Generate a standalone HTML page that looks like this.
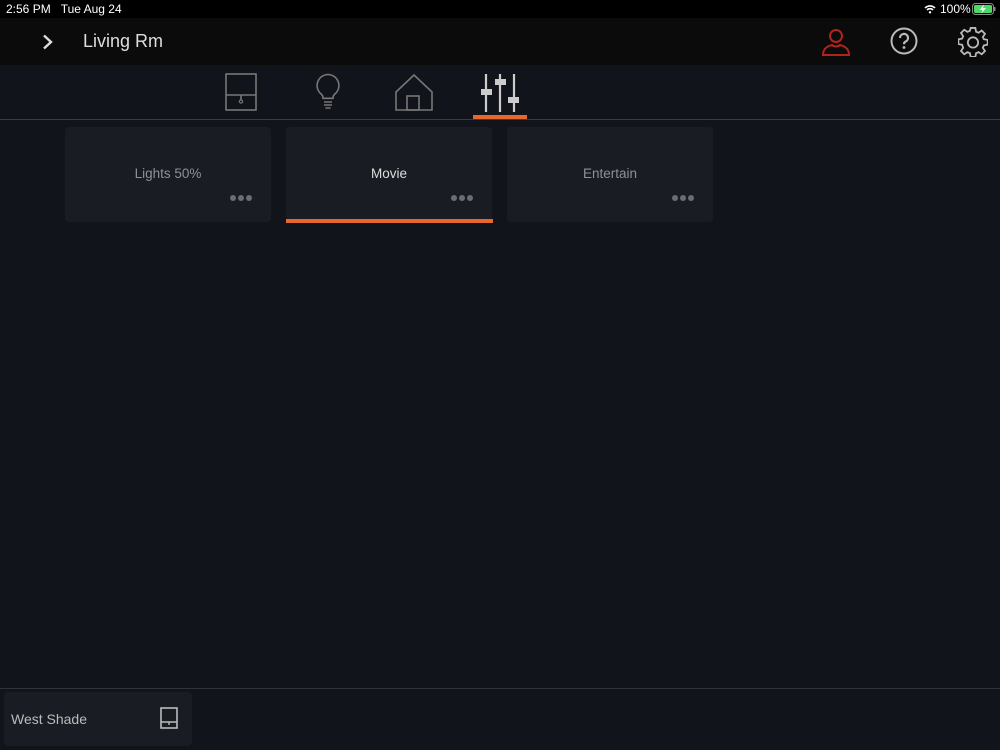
<!DOCTYPE html>
<html><head><meta charset="utf-8"><style>
*{margin:0;padding:0;box-sizing:border-box}
body{width:1000px;height:750px;background:#12141c;font-family:"Liberation Sans",sans-serif;position:relative;overflow:hidden;color:#ccc}
.sb{position:absolute;top:0;left:0;width:1000px;height:18px;background:#000;color:#fff;font-size:12px}
.hd{position:absolute;top:18px;left:0;width:1000px;height:47px;background:#0b0b0c}
.tabline{position:absolute;top:119px;left:0;width:1000px;height:1px;background:#3a3d46}
.card{position:absolute;top:127px;width:206px;height:95px;background:#1a1c23;border-radius:4px;font-size:13.5px;text-align:center;line-height:94px}
.dots{position:absolute;right:19px;top:68px;line-height:0}
.dots i{display:inline-block;width:6px;height:6px;border-radius:3px;background:#6b6d74;margin-left:2px}
.bl{position:absolute;top:688px;left:0;width:1000px;height:1px;background:#30333b}
</style></head><body>
<div class="sb"><span style="position:absolute;left:6px;top:2px">2:56 PM&nbsp;&nbsp;&nbsp;Tue Aug 24</span>
<svg style="position:absolute;left:924px;top:4px" width="12" height="10" viewBox="0 0 12 10"><path d="M1 4a7 7 0 0 1 10 0M3 6a4 4 0 0 1 6 0" stroke="#fff" stroke-width="1.6" fill="none"/><circle cx="6" cy="8.3" r="1.2" fill="#fff"/></svg>
<span style="position:absolute;left:940px;top:2px">100%</span>
<svg style="position:absolute;left:972px;top:3px" width="24" height="12" viewBox="0 0 24 12"><rect x="0.5" y="0.5" width="21" height="11" rx="3" fill="none" stroke="#888"/><rect x="2" y="2" width="18" height="8" rx="1.5" fill="#4cd964"/><rect x="22" y="4" width="1.5" height="4" fill="#888"/><path d="M12 1.5L7.5 7h3l-1 3.5L14 5h-3z" fill="#fff"/></svg>
</div>
<div class="hd">
<svg style="position:absolute;left:42px;top:16px" width="12" height="16" viewBox="0 0 12 16"><path d="M2 1.5l7 6.5-7 6.5" stroke="#ddd" stroke-width="2.4" fill="none"/></svg>
<span style="position:absolute;left:83px;top:13px;font-size:18px;color:#ddd">Living Rm</span>
<svg style="position:absolute;left:820px;top:8px" width="32" height="32" viewBox="0 0 32 32"><circle cx="16" cy="10" r="6" fill="none" stroke="#b0231e" stroke-width="2"/><path d="M3 29c0-7 5-9 9-10 2 2 6 2 8 0 4 1 9 3 9 10z" fill="none" stroke="#b0231e" stroke-width="2"/></svg>
<svg style="position:absolute;left:889px;top:8px" width="30" height="30" viewBox="0 0 30 30"><circle cx="15" cy="15" r="12.5" fill="none" stroke="#bbb" stroke-width="2"/><path d="M11 12a4 4 0 1 1 5.5 3.6c-1.2.6-1.5 1.3-1.5 2.6" fill="none" stroke="#bbb" stroke-width="2.2"/><circle cx="15" cy="21.5" r="1.4" fill="#bbb"/></svg>
<svg style="position:absolute;left:958px;top:9px" width="30" height="30" viewBox="0 0 32 32"><path d="M13.5 2h5l.8 4 2.6 1.1 3.4-2.3 3.5 3.5-2.3 3.4L27.6 14l4 .8v5l-4 .8-1.1 2.6 2.3 3.4-3.5 3.5-3.4-2.3-2.6 1.1-.8 4h-5l-.8-4-2.6-1.1-3.4 2.3-3.5-3.5 2.3-3.4L4.4 20l-4-.8v-5l4-.8 1.1-2.6-2.3-3.4 3.5-3.5 3.4 2.3 2.6-1.1z" transform="translate(0 -1)" fill="none" stroke="#bbb" stroke-width="1.9"/><circle cx="16" cy="16.5" r="5.5" fill="none" stroke="#bbb" stroke-width="1.9"/></svg>
</div>
<svg style="position:absolute;left:225px;top:73px" width="32" height="38" viewBox="0 0 32 38"><rect x="1" y="1" width="30" height="36" fill="none" stroke="#777" stroke-width="1.6"/><path d="M1 22h30M16 22v5" stroke="#777" stroke-width="1.6"/><circle cx="16" cy="28.5" r="1.6" fill="none" stroke="#777" stroke-width="1.2"/></svg>
<svg style="position:absolute;left:313px;top:73px" width="30" height="38" viewBox="0 0 30 38"><path d="M15 1.5a11 11 0 0 0-6.5 19.8c1 1 1.5 2.5 1.5 4h10c0-1.5.5-3 1.5-4A11 11 0 0 0 15 1.5z" fill="none" stroke="#777" stroke-width="1.6"/><path d="M11 29h8M11 32h8M12.5 35h5" stroke="#777" stroke-width="1.4"/></svg>
<svg style="position:absolute;left:395px;top:73px" width="38" height="38" viewBox="0 0 38 38"><path d="M1 37V19L19 2l18 17v18z" fill="none" stroke="#777" stroke-width="1.6"/><rect x="12" y="23" width="12" height="14" fill="none" stroke="#777" stroke-width="1.6"/></svg>
<svg style="position:absolute;left:480px;top:72px" width="42" height="40" viewBox="0 0 42 40"><path d="M6 2v38M20 2v38M34 2v38" stroke="#ccc" stroke-width="2.2"/><rect x="1" y="17" width="11" height="6" fill="#ccc"/><rect x="15" y="7" width="11" height="6" fill="#ccc"/><rect x="28" y="25" width="11" height="6" fill="#ccc"/></svg>
<div style="position:absolute;left:473px;top:115px;width:54px;height:4px;background:#e8672f"></div>
<div class="tabline"></div>
<div class="card" style="left:65px;color:#8e9096">Lights 50%<div class="dots"><i></i><i></i><i></i></div></div>
<div class="card" style="left:286px;color:#ddd;border-radius:4px 4px 0 0">Movie<div class="dots"><i></i><i></i><i></i></div><div style="position:absolute;left:0;bottom:-1px;width:207px;height:4px;background:#e8672f"></div></div>
<div class="card" style="left:507px;color:#8e9096">Entertain<div class="dots"><i></i><i></i><i></i></div></div>
<div class="bl"></div>
<div style="position:absolute;left:4px;top:692px;width:188px;height:54px;background:#1a1c23;border-radius:4px">
<span style="position:absolute;left:7px;top:19px;font-size:14px;color:#bbb">West Shade</span>
<svg style="position:absolute;left:156px;top:15px" width="18" height="22" viewBox="0 0 18 22"><rect x="1" y="1" width="16" height="20" fill="none" stroke="#bbb" stroke-width="1.6"/><path d="M1 15h16M9 15v3" stroke="#bbb" stroke-width="1.4"/></svg>
</div>
</body></html>
